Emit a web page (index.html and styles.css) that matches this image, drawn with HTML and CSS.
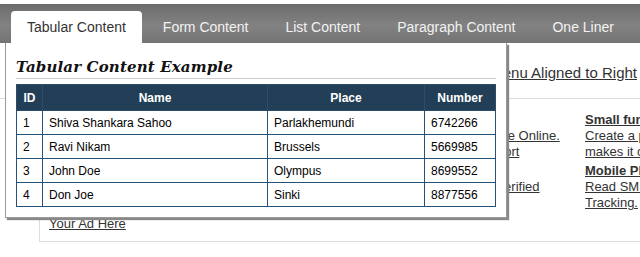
FILE: index.html
```html
<!DOCTYPE html>
<html lang="en">
<head>
  <meta charset="UTF-8">
  <title>Mega Menu - Tabular Content</title>
  <link rel="stylesheet" href="styles.css">
</head>
<body>
<div class="menubar">
  <ul class="tabs">
    <li class="tab active">Tabular Content
      <div class="dropdown">
        <h2>Tabular Content Example</h2>
        <table>
          <tr><th class="c-id">ID</th><th class="c-name">Name</th><th class="c-place">Place</th><th class="c-num">Number</th></tr>
          <tr><td>1</td><td>Shiva Shankara Sahoo</td><td>Parlakhemundi</td><td>6742266</td></tr>
          <tr><td>2</td><td>Ravi Nikam</td><td>Brussels</td><td>5669985</td></tr>
          <tr><td>3</td><td>John Doe</td><td>Olympus</td><td>8699552</td></tr>
          <tr><td>4</td><td>Don Joe</td><td>Sinki</td><td>8877556</td></tr>
        </table>
      </div>
    </li>
    <li class="tab">Form Content</li>
    <li class="tab">List Content</li>
    <li class="tab">Paragraph Content</li>
    <li class="tab">One Liner</li>
  </ul>
</div>

<div class="main">
  <h3 class="menu-title"><a href="#">Menu Aligned to Right</a></h3>
  <div class="box">
    <div class="cols">
      <div class="col col-a"></div>
      <div class="col col-b">
        <a class="head" href="#">Web Hosting</a>
        <a href="#">Buy a Domain Name Online.</a>
        <a href="#">and get 24x7 Support</a>
        <a class="head next" href="#">SSL Certificates</a>
        <a href="#">Get your website Verified</a>
      </div>
      <div class="col col-c">
        <a class="head" href="#">Small functionalities</a>
        <a href="#">Create a page which</a>
        <a href="#">makes it convenient</a>
        <a class="head next" href="#">Mobile Phone Tracker</a>
        <a href="#">Read SMS, Call Logs and GPS</a>
        <a href="#">Tracking.</a>
      </div>
    </div>
    <a class="ad" href="#">Your Ad Here</a>
  </div>
</div>
</body>
</html>
```

FILE: styles.css
```css
body { margin: 0; font-family: "Liberation Sans", Arial, sans-serif; color: #333; background: #fff; overflow: hidden; }
a { color: #333; }

/* top menu */
.menubar { position: relative; margin-top: 4px; height: 39px; background: linear-gradient(to bottom, #6c6c6c, #828282 55%, #747474); z-index: 5; }
.tabs { display: flex; margin: 0; padding: 7px 0 0 11px; list-style: none; }
.tab { height: 32px; line-height: 32px; padding: 0 16px; margin-right: 5px; font-size: 14px; color: #f2f2f2; white-space: nowrap; }
.tab.active { background: #fff; color: #333; border-radius: 4px 4px 0 0; }

/* dropdown panel */
.dropdown { position: absolute; left: 5px; top: 39px; width: 480px; padding: 10px; background: #fff; border: 1px solid #999; border-top: 0; box-shadow: 2px 2px 1px #888; line-height: normal; color: #000; }
.dropdown h2 { margin: 4px 0 5px; padding-bottom: 1px; font-family: "DejaVu Serif", Georgia, serif; font-style: italic; font-weight: bold; font-size: 15px; letter-spacing: 0.15px; line-height: 20px; color: #111; border-bottom: 1px solid #ccc; }
.dropdown table { width: 480px; table-layout: fixed; border-collapse: collapse; border: 1px solid #24507a; font-size: 12px; }
.dropdown th { height: 25px; padding: 0; background: #233f57; color: #fff; font-weight: bold; text-align: center; border: 1px solid #2c4d6c; }
.dropdown td { height: 23px; padding: 0 6px; border: 1px solid #24507a; white-space: nowrap; }
.c-id { width: 25px; }
.c-name { width: 224px; }
.c-place { width: 156px; }

/* page behind */
.menu-title { margin: 20px 0 0; padding: 0 3px 15px 0; font-size: 15px; font-weight: normal; line-height: 20px; text-align: right; border-bottom: 1px solid #ddd; }
.box { margin-left: 39px; padding: 13px 0 9px 9px; border-left: 1px solid #ddd; border-bottom: 1px solid #ddd; font-size: 13px; line-height: 16px; }
.cols { display: flex; white-space: nowrap; }
.col { display: flex; flex-direction: column; flex: none; align-items: flex-start; }
.col-a { width: 346px; }
.col-b { width: 190px; }
.head { font-weight: bold; }
.head.next { margin-top: 3px; }
.ad { display: inline-block; margin-top: 5px; }
```
